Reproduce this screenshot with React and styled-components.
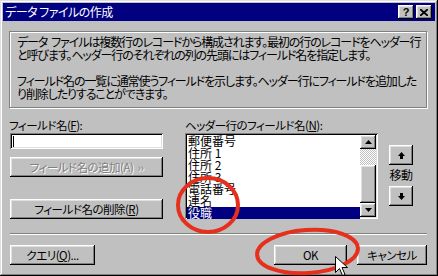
import styled, { createGlobalStyle } from "styled-components";

const GlobalStyle = createGlobalStyle`
  html, body { margin: 0; padding: 0; background: #c0c0c0; }
  body {
    font-family: "Noto Sans CJK JP", "Liberation Sans", sans-serif;
    font-size: 11.5px;
    letter-spacing: -0.5px;
    font-feature-settings: "palt";
  }
`;

const raised = `
  box-shadow: inset -1px -1px #000, inset 1px 1px #fff,
    inset -2px -2px #808080, inset 2px 2px #dfdfdf;
`;

const sunken = `
  box-shadow: inset 1px 1px #808080, inset -1px -1px #fff,
    inset 2px 2px #000, inset -2px -2px #dfdfdf;
`;

const Window = styled.div`
  position: relative;
  width: 438px;
  height: 276px;
  box-sizing: border-box;
  padding: 3px;
  background: #c0c0c0;
  box-shadow: inset -1px -1px #000, inset 1px 1px #dfdfdf,
    inset -2px -2px #808080, inset 2px 2px #fff;
  display: flex;
  flex-direction: column;
  overflow: hidden;
`;

const TitleBar = styled.div`
  height: 18px;
  background: #000080;
  color: #fff;
  display: flex;
  align-items: center;
  padding: 0 3px 0 2px;
  font-size: 12px;
  line-height: 18px;
`;

const TitleText = styled.div`
  flex: 1;
  white-space: nowrap;
`;

const TitleButton = styled.div`
  width: 16px;
  height: 14px;
  box-sizing: border-box;
  background: #c0c0c0;
  color: #000;
  margin-left: 2px;
  display: flex;
  align-items: center;
  justify-content: center;
  font: bold 11px/1 "Liberation Sans", sans-serif;
  letter-spacing: 0;
  ${raised}
`;

const Body = styled.div`
  flex: 1;
  display: flex;
  flex-direction: column;
  padding: 10px 8px 0 6px;
`;

const InfoBox = styled.div`
  height: 77px;
  box-sizing: border-box;
  border: 1px solid #808080;
  box-shadow: inset 1px 1px #fff, 1px 1px #fff;
  padding: 3px 6px 0 7px;
  line-height: 13px;
  white-space: nowrap;
  font-size: 12px;
  letter-spacing: -1.1px;
`;

const Para = styled.p`
  margin: 0 0 13px 0;
`;

const Gap = styled.span`
  display: inline-block;
  width: 4px;
`;

const Fields = styled.div`
  display: flex;
  margin-top: 11px;
`;

const Column = styled.div`
  display: flex;
  flex-direction: column;
  width: ${(p) => p.$w}px;
  margin-left: ${(p) => p.$ml || 0}px;
`;

const Label = styled.div`
  height: 14px;
  line-height: 13px;
  white-space: nowrap;
`;

const Key = styled.span`
  text-decoration: underline;
`;

const TextInput = styled.div`
  height: 16px;
  box-sizing: border-box;
  margin-left: 1px;
  background: #fff;
  ${sunken}
  display: flex;
  align-items: center;
  padding-left: 3px;
`;

const Caret = styled.div`
  width: 1px;
  height: 11px;
  background: #000;
`;

const Button = styled.div`
  width: ${(p) => p.$w}px;
  height: 20px;
  box-sizing: border-box;
  margin-top: ${(p) => p.$mt || 0}px;
  margin-left: ${(p) => p.$ml || 0}px;
  background: #c0c0c0;
  display: flex;
  align-items: center;
  justify-content: center;
  white-space: nowrap;
  color: ${(p) => (p.$disabled ? "#808080" : "#000")};
  text-shadow: ${(p) => (p.$disabled ? "1px 1px #fff" : "none")};
  ${raised}
`;

const ListBox = styled.div`
  height: 86px;
  box-sizing: border-box;
  padding: 2px;
  background: #fff;
  ${sunken}
  display: flex;
`;

const Items = styled.div`
  flex: 1;
  display: flex;
  flex-direction: column;
`;

const Item = styled.div`
  height: 12px;
  line-height: 12px;
  font-size: 12px;
  letter-spacing: 0;
  font-feature-settings: normal;
  padding-left: 1px;
  white-space: nowrap;
  background: ${(p) => (p.$selected ? "#000080" : "transparent")};
  color: ${(p) => (p.$selected ? "#fff" : "#000")};
`;

const ScrollBar = styled.div`
  width: 16px;
  display: flex;
  flex-direction: column;
`;

const ScrollButton = styled.div`
  height: 14px;
  box-sizing: border-box;
  background: #c0c0c0;
  display: flex;
  align-items: center;
  justify-content: center;
  ${raised}
`;

const Track = styled.div`
  height: 16px;
  background-image: repeating-conic-gradient(#c0c0c0 0 25%, #fff 0 50%);
  background-size: 2px 2px;
`;

const Thumb = styled.div`
  flex: 1;
  background: #c0c0c0;
  ${raised}
`;

const MoveColumn = styled.div`
  display: flex;
  flex-direction: column;
  align-items: center;
  width: 24px;
  margin-left: 11px;
  padding-top: 26px;
`;

const MoveButton = styled.div`
  width: 24px;
  height: 20px;
  box-sizing: border-box;
  margin-top: ${(p) => p.$mt || 0}px;
  background: #c0c0c0;
  display: flex;
  align-items: center;
  justify-content: center;
  ${raised}
`;

const MoveText = styled.div`
  margin-top: 3px;
  height: 13px;
  line-height: 13px;
  font-size: 12px;
  white-space: nowrap;
`;

const Separator = styled.div`
  margin: 14px 0 0 1px;
  border-top: 1px solid #808080;
  border-bottom: 1px solid #fff;
`;

const ButtonRow = styled.div`
  display: flex;
  margin-top: 10px;
  padding-left: 1px;
`;

const Spacer = styled.div`
  flex: 1;
`;

const Overlay = styled.svg`
  position: absolute;
  left: 0;
  top: 0;
  pointer-events: none;
`;

const UpArrow = () => (
  <svg width="7" height="7" viewBox="0 0 7 7">
    <path d="M3.5 0 L7 4 H5 V7 H2 V4 H0 Z" fill="#000" />
  </svg>
);

const DownArrow = () => (
  <svg width="7" height="7" viewBox="0 0 7 7">
    <path d="M3.5 7 L7 3 H5 V0 H2 V3 H0 Z" fill="#000" />
  </svg>
);

const Tri = ({ down }) => (
  <svg width="7" height="4" viewBox="0 0 7 4">
    <path d={down ? "M0 0 H7 L3.5 4 Z" : "M3.5 0 L7 4 H0 Z"} fill="#000" />
  </svg>
);

const CloseGlyph = () => (
  <svg width="8" height="7" viewBox="0 0 8 7">
    <path d="M0 0 L8 7 M8 0 L0 7" stroke="#000" strokeWidth="1.8" />
  </svg>
);

const fields = ["郵便番号", "住所 1", "住所 2", "住所 3", "電話番号", "連名", "役職"];

export default function App() {
  return (
    <>
      <GlobalStyle />
      <Window>
        <TitleBar>
          <TitleText>データ ファイルの作成</TitleText>
          <TitleButton>?</TitleButton>
          <TitleButton>
            <CloseGlyph />
          </TitleButton>
        </TitleBar>
        <Body>
          <InfoBox>
            <Para>
              データ<Gap />ファイルは複数行のレコードから構成されます。最初の行のレコードをヘッダー行
              <br />
              と呼びます。ヘッダー行のそれぞれの列の先頭にはフィールド名を指定します。
            </Para>
            <Para>
              フィールド名の一覧に通常使うフィールドを示します。ヘッダー行にフィールドを追加した
              <br />
              り削除したりすることができます。
            </Para>
          </InfoBox>
          <Fields>
            <Column $w={154}>
              <Label>
                フィールド名(<Key>F</Key>):
              </Label>
              <TextInput>
                <Caret />
              </TextInput>
              <Button $w={153} $ml={1} $mt={8} $disabled>
                フィールド名の追加(A)&nbsp;&nbsp;››
              </Button>
              <Button $w={153} $ml={1} $mt={22}>
                フィールド名の削除(<Key>R</Key>)
              </Button>
            </Column>
            <Column $w={193} $ml={22}>
              <Label>
                ヘッダー行のフィールド名(<Key>N</Key>):
              </Label>
              <ListBox>
                <Items>
                  {fields.map((f, i) => (
                    <Item key={f} $selected={i === fields.length - 1}>
                      {f}
                    </Item>
                  ))}
                </Items>
                <ScrollBar>
                  <ScrollButton>
                    <Tri />
                  </ScrollButton>
                  <Track />
                  <Thumb />
                  <ScrollButton>
                    <Tri down />
                  </ScrollButton>
                </ScrollBar>
              </ListBox>
            </Column>
            <MoveColumn>
              <MoveButton>
                <UpArrow />
              </MoveButton>
              <MoveText>移動</MoveText>
              <MoveButton $mt={5}>
                <DownArrow />
              </MoveButton>
            </MoveColumn>
          </Fields>
          <Separator />
          <ButtonRow>
            <Button $w={85}>
              クエリ(<Key>Q</Key>)...
            </Button>
            <Spacer />
            <Button $w={73}>OK</Button>
            <Button $w={70} $ml={10}>
              キャンセル
            </Button>
          </ButtonRow>
        </Body>
        <Overlay width="438" height="276" viewBox="0 0 438 276">
          <ellipse cx="208" cy="205" rx="30" ry="27" fill="none" stroke="#e4301c" strokeWidth="4" />
          <ellipse
            cx="307.5"
            cy="251.5"
            rx="50.5"
            ry="21.5"
            fill="none"
            stroke="#e4301c"
            strokeWidth="4"
            transform="rotate(-4 307.5 251.5)"
          />
          <path
            d="M335.5 256.5 V272.5 L339.5 268.5 L342.5 275.5 L345 274.5 L342 267.5 H347.5 Z"
            fill="#fff"
            stroke="#000"
            strokeWidth="1"
          />
        </Overlay>
      </Window>
    </>
  );
}
